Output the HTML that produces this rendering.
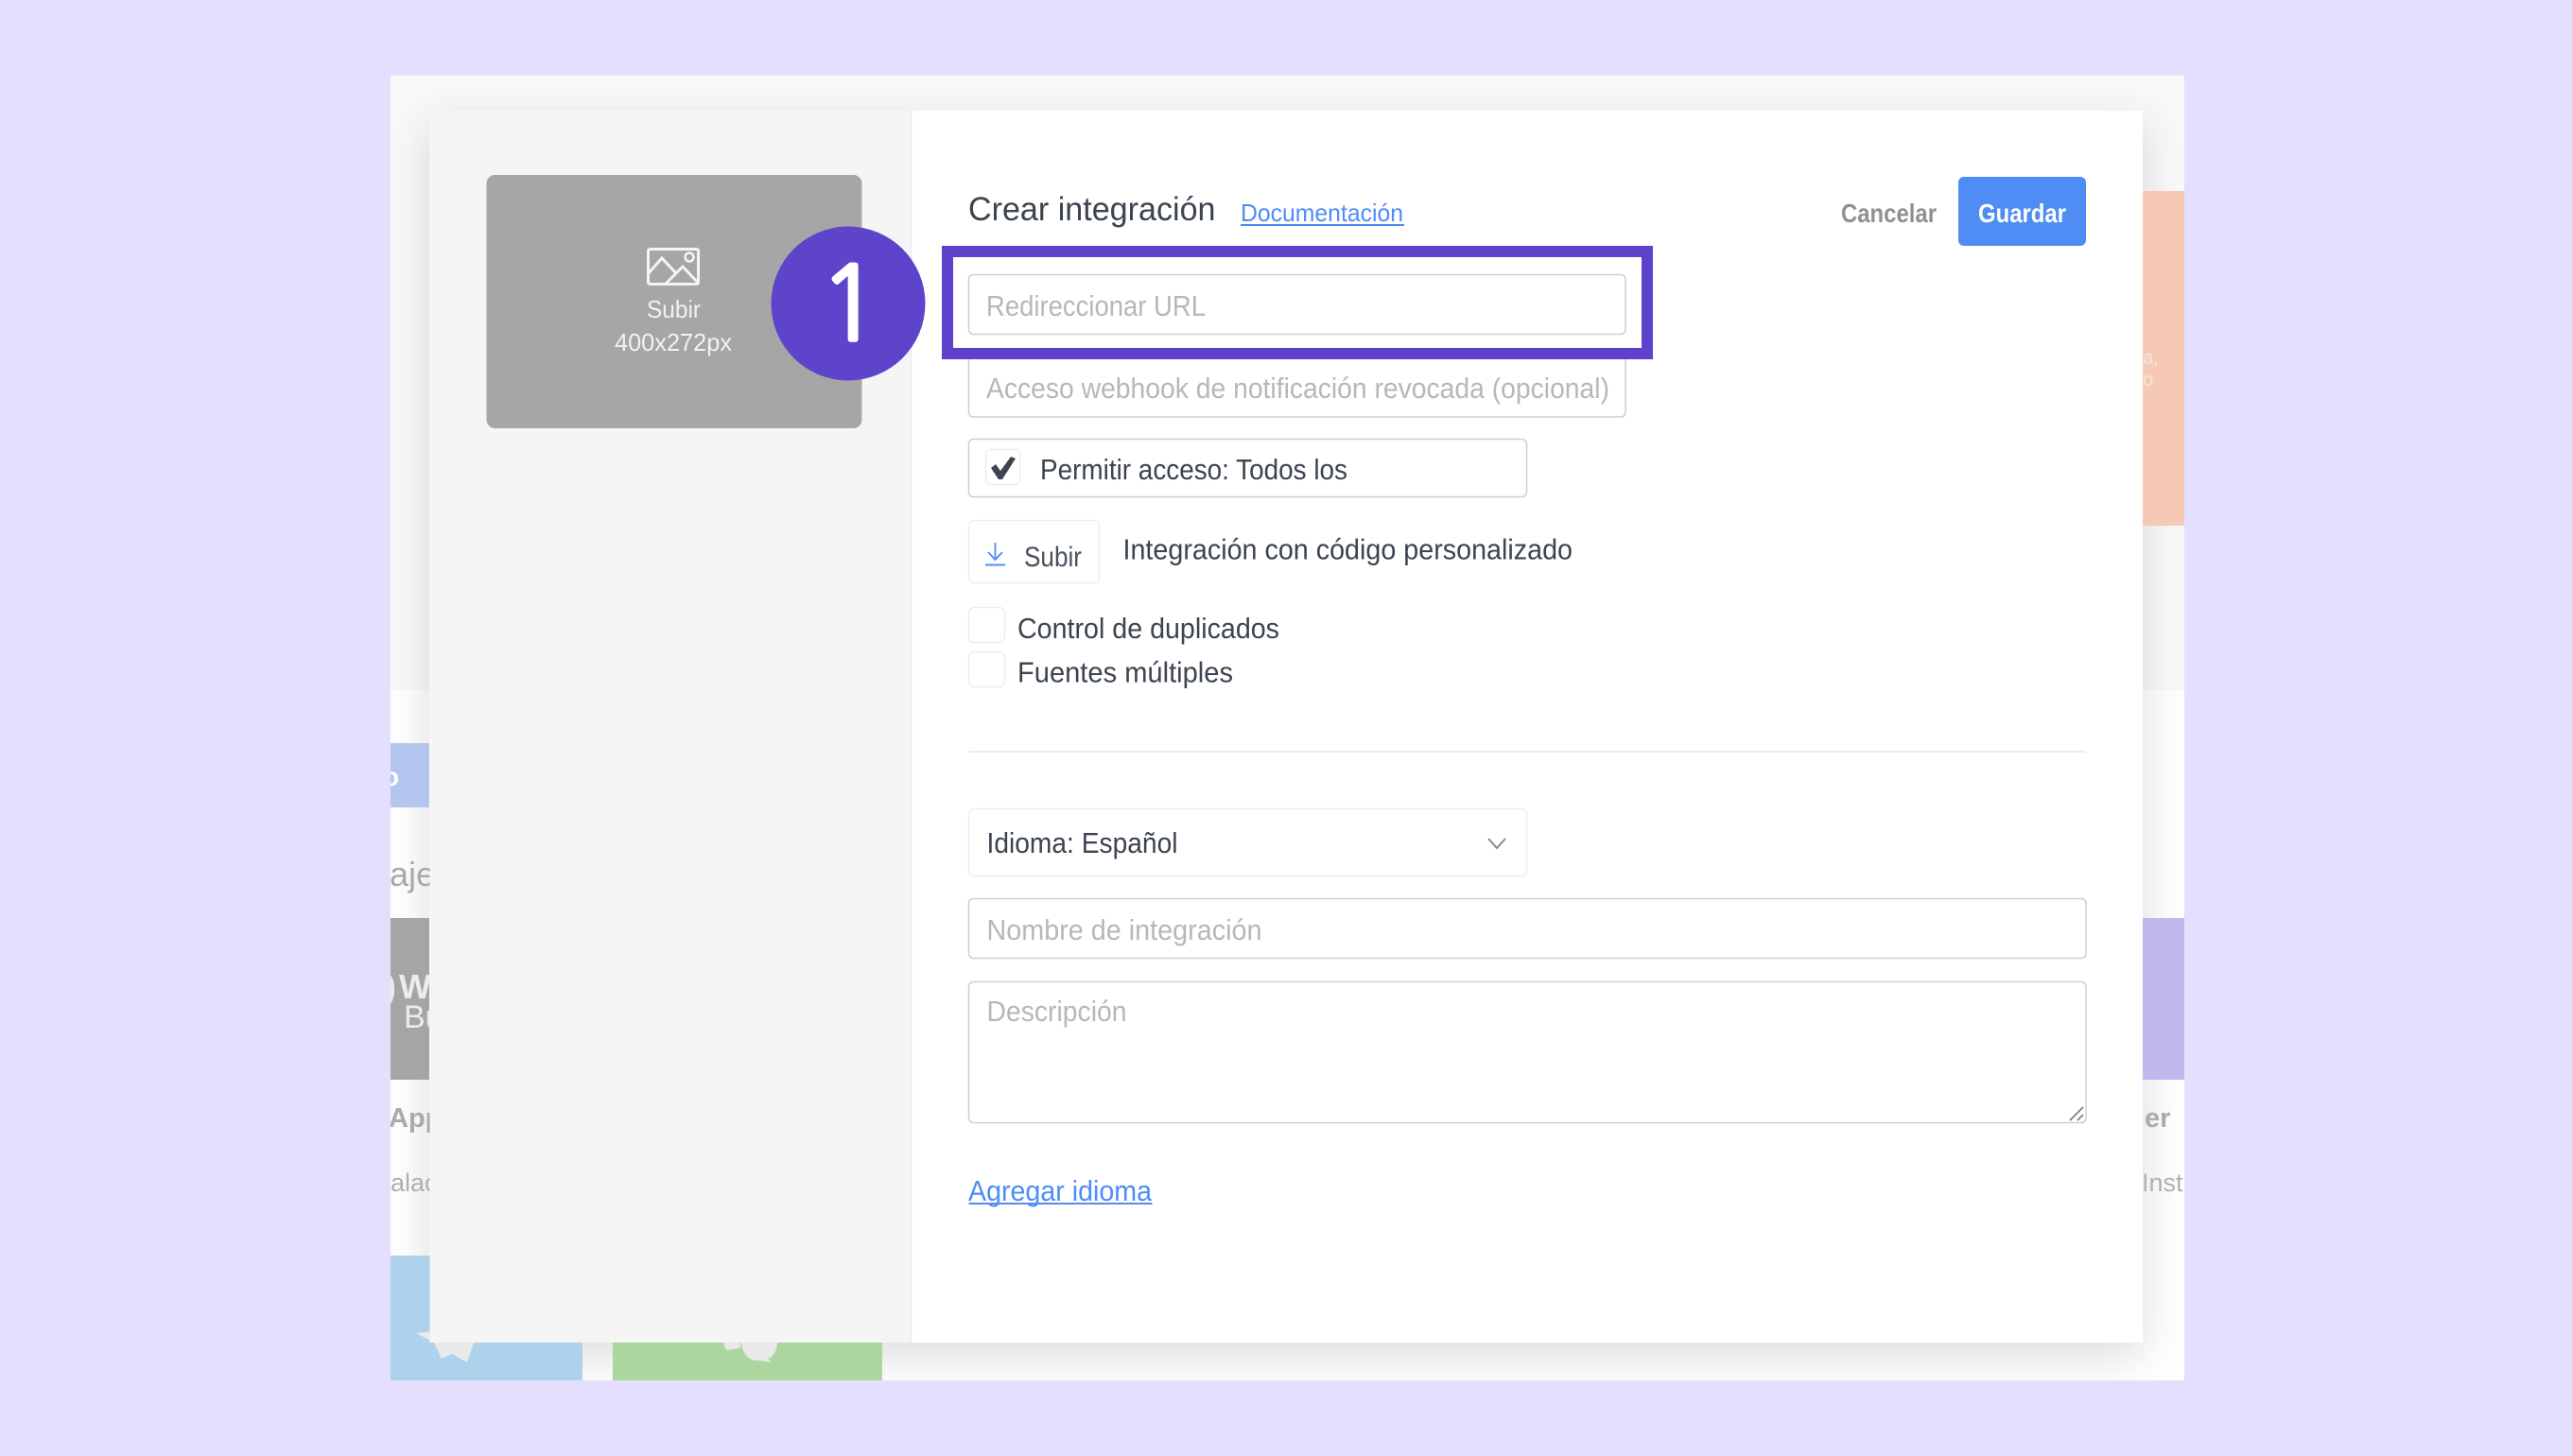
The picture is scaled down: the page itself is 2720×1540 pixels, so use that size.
<!DOCTYPE html>
<html lang="es">
<head>
<meta charset="utf-8">
<title>Crear integración</title>
<style>
html,body{margin:0;padding:0;width:2720px;height:1540px;overflow:hidden;background:#E4DFFE}
.a{position:absolute}
text{font-family:"Liberation Sans",Arial,sans-serif}
</style>
</head>
<body>
<div class="a" style="left:413px;top:80px;width:1897px;height:1380px;background:#fff;overflow:hidden">
  <div class="a" style="left:0;top:0;width:1897px;height:650px;background:#f9f9f9"></div>
  <div class="a" style="left:41px;top:37px;width:1812px;height:1303px;box-shadow:0 14px 44px rgba(40,50,50,.17)"></div>
  <!-- background tiles -->
  <div class="a" style="left:1853px;top:122px;width:44px;height:354px;background:#F6C9B5"></div>
  <div class="a" style="left:0;top:706px;width:41px;height:68px;background:#B3C6F0"></div>
  <div class="a" style="left:0;top:891px;width:41px;height:171px;background:#A5A5A5"></div>
  <div class="a" style="left:1853px;top:891px;width:44px;height:171px;background:#BFB9EE"></div>
  <div class="a" style="left:0;top:1248px;width:203px;height:132px;background:#AED2EC"></div>
  <div class="a" style="left:235px;top:1248px;width:285px;height:132px;background:#ABD79F"></div>
</div>

<svg class="a" style="left:0;top:0" width="2720" height="1540" viewBox="0 0 2720 1540" xmlns="http://www.w3.org/2000/svg">
  <defs>
    <clipPath id="c"><rect x="413" y="80" width="1897" height="1380"/></clipPath>
  </defs>
  <!-- background fragments -->
  <g clip-path="url(#c)">
    <text x="2266" y="385" font-size="20" fill="#f3e4dc">a,</text>
    <text x="2266" y="408" font-size="20" fill="#f3e4dc">o</text>
    <text x="405" y="831" font-size="28" font-weight="bold" fill="#fff">o</text>
    <text x="412" y="937" font-size="36" fill="#a9a9a9">aje</text>
    <text x="407" y="1056" font-size="36" font-weight="bold" fill="#ececec">)</text>
    <text x="422" y="1056" font-size="36" font-weight="bold" fill="#ececec">W</text>
    <text x="427" y="1087" font-size="34" fill="#ececec">Bu</text>
    <text x="411" y="1192" font-size="29" font-weight="bold" fill="#ababab">App</text>
    <text x="413" y="1260" font-size="27" fill="#b0b0b0">alac</text>
    <text x="2268" y="1192" font-size="29" font-weight="bold" fill="#ababab">er</text>
    <text x="2265" y="1260" font-size="27" fill="#b0b0b0">Inst</text>
    <path d="M440 1410 L520 1400 L501 1420 L494 1441 L478 1432 L467 1437 L459 1420Z" fill="#e8e9e9"/>
    <path d="M784 1420 H822 C822 1430 816 1436 812 1437 L816 1441 L803 1439 C792 1440 785 1432 784 1420Z" fill="#e8e9e9"/>
    <path d="M765 1420 H783 V1426 L768 1428Z" fill="#e8e9e9"/>
  </g>

  <!-- modal -->
  <rect x="454.5" y="117" width="510" height="1303" fill="#F5F5F5"/>
  <rect x="964.5" y="117" width="1301.5" height="1303" fill="#fff"/>
  <line x1="963.5" y1="117" x2="963.5" y2="1420" stroke="#eeeeee" stroke-width="2"/>

  <!-- image upload -->
  <rect x="514.5" y="185" width="397" height="268" rx="9" fill="#A6A6A6"/>
  <rect x="685.5" y="263.5" width="53" height="37" rx="2" fill="none" stroke="#f4f4f4" stroke-width="3"/>
  <circle cx="729" cy="272" r="4.5" fill="none" stroke="#f4f4f4" stroke-width="2.5"/>
  <path d="M685 290 L700 273 L715 289 M703 301 L722 282 L739 300" fill="none" stroke="#f4f4f4" stroke-width="3"/>
  <text x="684" y="336" font-size="26" fill="#f2f2f2" textLength="57" lengthAdjust="spacingAndGlyphs">Subir</text>
  <text x="650" y="371" font-size="26" fill="#f2f2f2" textLength="124" lengthAdjust="spacingAndGlyphs">400x272px</text>

  <!-- title row -->
  <text x="1024" y="233" font-size="35" fill="#3C4450" textLength="261.5" lengthAdjust="spacingAndGlyphs">Crear integración</text>
  <text x="1312" y="234" font-size="26" fill="#4F8CF3" textLength="172" lengthAdjust="spacingAndGlyphs">Documentación</text>
  <rect x="1312" y="237" width="173" height="2" fill="#4F8CF3"/>
  <text x="1947" y="235" font-size="28" font-weight="bold" fill="#8E9094" textLength="101" lengthAdjust="spacingAndGlyphs">Cancelar</text>
  <rect x="2071" y="187" width="135" height="73" rx="6" fill="#4F8CF3"/>
  <text x="2092" y="235" font-size="28" font-weight="bold" fill="#fff" textLength="93" lengthAdjust="spacingAndGlyphs">Guardar</text>

  <!-- webhook input (sits below highlight) -->
  <rect x="1024.5" y="372" width="694.5" height="69" rx="5" fill="#fff" stroke="#cfcfcf" stroke-width="1.5"/>

  <!-- highlight -->
  <rect x="1002" y="266" width="740" height="108" fill="#fff" stroke="#5F42CC" stroke-width="12"/>

  <!-- redirect input -->
  <rect x="1024.5" y="290.5" width="694.5" height="63" rx="5" fill="#fff" stroke="#cfcfcf" stroke-width="1.5"/>
  <text x="1043" y="334" font-size="30.5" fill="#B5B7B9" textLength="232" lengthAdjust="spacingAndGlyphs">Redireccionar URL</text>
  <text x="1043" y="421" font-size="30.5" fill="#B5B7B9" textLength="659" lengthAdjust="spacingAndGlyphs">Acceso webhook de notificación revocada (opcional)</text>

  <!-- allow access -->
  <rect x="1024.5" y="464.5" width="590" height="61" rx="5" fill="#fff" stroke="#cfcfcf" stroke-width="1.5"/>
  <rect x="1042.5" y="475.5" width="36" height="37" rx="5" fill="#fff" stroke="#eeeeee" stroke-width="1.5"/>
  <path d="M1048 495 L1053 491 L1058 498 L1069 483 L1074 485 L1060 507 L1056 507Z" fill="#3E4552"/>
  <text x="1100" y="507" font-size="30.5" fill="#3C4450" textLength="325" lengthAdjust="spacingAndGlyphs">Permitir acceso: Todos los</text>

  <!-- upload -->
  <rect x="1024.5" y="550.5" width="138" height="66" rx="6" fill="#fff" stroke="#eeeeee" stroke-width="1.5"/>
  <path d="M1052.5 574 V592 M1045 584 L1052.5 592 L1060 584" fill="none" stroke="#4F8CF3" stroke-width="1.8"/>
  <rect x="1042" y="596.5" width="21" height="2" fill="#4F8CF3"/>
  <text x="1083" y="599" font-size="29.5" fill="#4A505C" textLength="61" lengthAdjust="spacingAndGlyphs">Subir</text>
  <text x="1187.5" y="591.5" font-size="30.5" fill="#3C4450" textLength="475.5" lengthAdjust="spacingAndGlyphs">Integración con código personalizado</text>

  <!-- checkboxes -->
  <rect x="1024.5" y="642.5" width="38" height="37" rx="6" fill="#fff" stroke="#eeeeee" stroke-width="1.5"/>
  <text x="1076" y="675" font-size="30.5" fill="#3C4450" textLength="277" lengthAdjust="spacingAndGlyphs">Control de duplicados</text>
  <rect x="1024.5" y="689.5" width="38" height="37" rx="6" fill="#fff" stroke="#eeeeee" stroke-width="1.5"/>
  <text x="1076" y="721.5" font-size="30.5" fill="#3C4450" textLength="228" lengthAdjust="spacingAndGlyphs">Fuentes múltiples</text>

  <line x1="1024" y1="795" x2="2206" y2="795" stroke="#ededed" stroke-width="2"/>

  <!-- language -->
  <rect x="1024.5" y="855.5" width="590" height="71" rx="6" fill="#fff" stroke="#eeeeee" stroke-width="1.5"/>
  <text x="1043.5" y="902" font-size="30.5" fill="#3C4450" textLength="202" lengthAdjust="spacingAndGlyphs">Idioma: Español</text>
  <path d="M1574 887 L1583 897 L1592 887" fill="none" stroke="#80858c" stroke-width="1.8"/>

  <rect x="1024.5" y="950.5" width="1181.5" height="63" rx="5" fill="#fff" stroke="#cfcfcf" stroke-width="1.5"/>
  <text x="1043.5" y="994" font-size="30.5" fill="#B5B7B9" textLength="291" lengthAdjust="spacingAndGlyphs">Nombre de integración</text>

  <rect x="1024.5" y="1038.5" width="1181.5" height="149" rx="5" fill="#fff" stroke="#cfcfcf" stroke-width="1.5"/>
  <text x="1043.5" y="1080" font-size="30.5" fill="#B5B7B9" textLength="148" lengthAdjust="spacingAndGlyphs">Descripción</text>
  <path d="M2189 1185 L2203 1171 M2197 1185 L2203 1179" fill="none" stroke="#77797c" stroke-width="1.6"/>

  <text x="1024" y="1270" font-size="30.5" fill="#4F8CF3" textLength="194" lengthAdjust="spacingAndGlyphs">Agregar idioma</text>
  <rect x="1024.5" y="1272" width="194" height="2" fill="#4F8CF3"/>

  <!-- step badge -->
  <circle cx="897" cy="321" r="81.5" fill="#5E43CB"/>
  <text x="866" y="359.5" font-size="108" fill="#fff" stroke="#fff" stroke-width="3.5" style="font-family:'NanumGothic',sans-serif">1</text>
</svg>
</body>
</html>
